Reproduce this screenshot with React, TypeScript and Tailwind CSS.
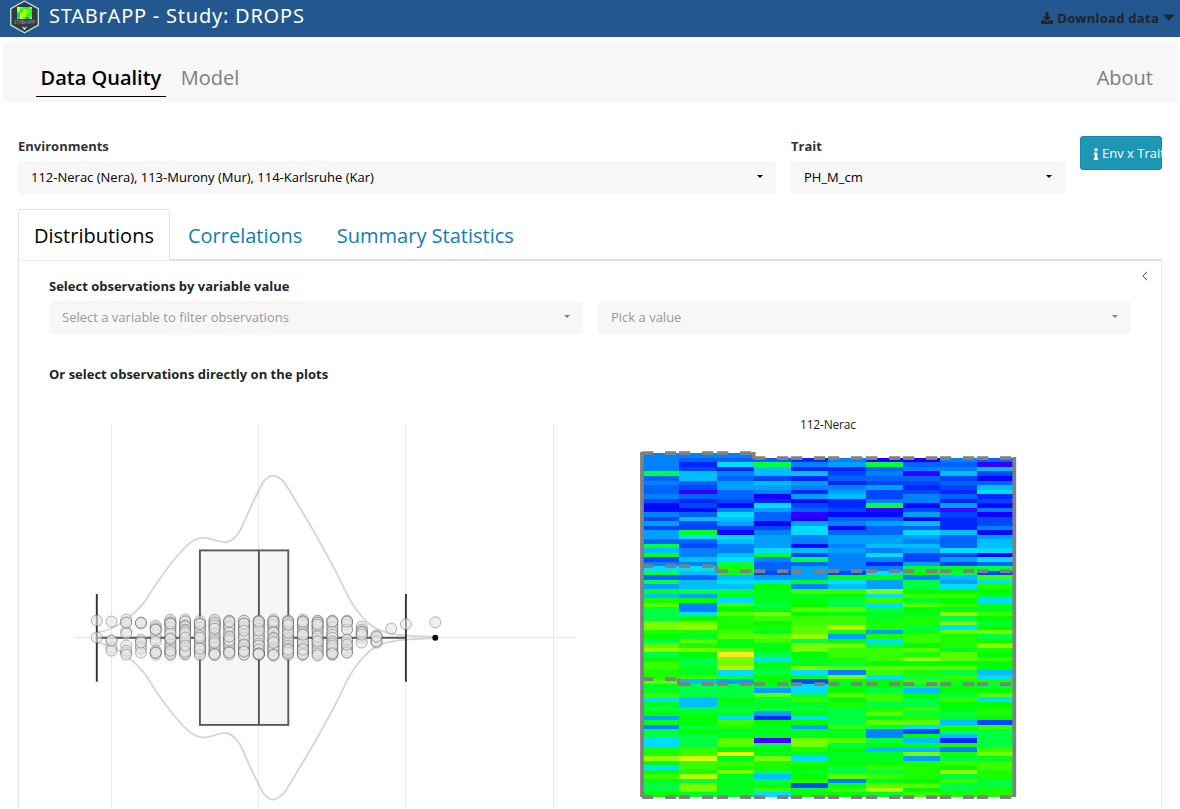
import React from "react";
import { FaDownload, FaInfo } from "react-icons/fa";

const palette: Record<string, string> = {
  A: "#4c00ff", B: "#3300ff", C: "#1500ff", D: "#0008ff", E: "#0026ff", F: "#0045ff",
  G: "#0063ff", H: "#0082ff", I: "#00a0ff", J: "#00beff", K: "#00ddff", L: "#00ff40",
  M: "#00ff20", N: "#00ff00", O: "#1aff00", P: "#38ff00", Q: "#57ff00", R: "#75ff00",
  S: "#94ff00", T: "#b5ff00", U: "#d6ff00", V: "#ffff00", W: "#ffe923",
};

const field = [
  "HHHHLGHGGHFDDHFIFIIGLJMFHK" + "LGLIMJOQLLLRRONLQSLNPPOOQ" + "MMPKMLNIMHLLKKOOSNKMPMLLN",
  "HGEFJJGFBGEFDGJFFMKGFHHJHK" + "JGJJLINHHKNRSOMQORNLLMMPJ" + "LLLJJLMNNLNLLLPPUPPOTLRRM",
  "HGKEHGIIGGFDHKJIFCKJHHJKLO" + "MJKJLMKPNQOOOPQNMQWRRTKLI" + "LLLNMLMKPOMMQQNVMPORMMMMM",
  ".GLJJFJIHCEKIGGCFHIIIKMHGG" + "FIKNMMMLMRPNOMQPMNLKMMLNN" + "MIQLMLIENMMMALNMROOLJLMPK",
  ".EHEJEIHEIDFGBCIKKHHDJFLGI" + "IIMHPMNNQNPPQQSLRRNMMRKMF" + "KKLPMLNKNIMMRROMKONMNOFMN",
  ".HIEFGEHIJEEFDGHCGIIHIHHHH" + "FNKJPNLLQMPPTOINRPPOLQHRN" + "MNQNOLLLLPMMQLNMMNLLQHMPN",
  ".CLGHGFIFFHLBDGIGGIIJHKHEH" + "KNIIRKPKLMMOOIOKLPPPNQPKN" + "NLPPLOQMQLHHLNJMMNPLPMQTM",
  ".CGHBGFEFHHDFIDJGKIHJIFFIM" + "NHLLNPMQNMOOLMPPNQOSNQOLP" + "LJNLLPLOQKFNJMJRIOOOONQNP",
  ".HGHJFGFEGEIAFEEEJGGGKFIFM" + "LJIKNPNPMSLRKQOOOMQQNQLPO" + "MNLPNNLMJOLJEOHOLPNSLPLLO",
  ".GBJFDGJKEFDHCFFHDIJJKDKGL" + "FPKONMKMMPNLNRLNSONPNNJKO" + "LNQKNOONFPLLLLPRMPPOOLLOO",
];

const colX = [642, 679, 717, 754, 791, 828, 866, 903, 940, 977, 1014];
const rowY = (r: number) => Math.round(453.4 + 4.52 * r);
const blockEdge = [
  [0, 0, 0, 1, 1, 1, 1, 1, 1, 1],
  [25, 25, 26, 26, 26, 26, 26, 26, 26, 26],
  [50, 51, 51, 51, 51, 51, 51, 51, 51, 51],
  [76, 76, 76, 76, 76, 76, 76, 76, 76, 76],
];

function FieldMap() {
  return (
    <svg className="block" width="390" height="395" viewBox="632 414 390 395" role="img">
      <g shapeRendering="crispEdges">
        {field.map((col, c) =>
          col.split("").map((k, r) =>
            k === "." ? null : (
              <rect key={c + "-" + r} x={colX[c]} y={rowY(r)} width={colX[c + 1] - colX[c]} height={rowY(r + 1) - rowY(r)} fill={palette[k]} />
            )
          )
        )}
      </g>
      <g stroke="#808080" strokeWidth="3.8">
        <path d="M642 452V797" />
        <path d="M1014.3 457V797" />
        <path d="M753.7 452V459M716.5 565.5V572M679 678.5V685" />
        {blockEdge.map((edges, b) =>
          edges.map((r, c) => {
            const y = rowY(r) + 0.2;
            return <path key={b + "-" + c} d={`M${colX[c]} ${y}h11.3m11.7 0h11.3`} />;
          })
        )}
      </g>
      <text x="828" y="429" textAnchor="middle" fontSize="12" textLength="56" fill="#222" className="font-['Open_Sans',sans-serif]">112-Nerac</text>
    </svg>
  );
}

const outline: [number, number][] = [
  [96.7, 632.7], [111.7, 628.3], [126.7, 619.3], [143.3, 603.3], [153.3, 588.3], [165, 571.5], [176.7, 556.7], [190, 542.9],
  [203.3, 537.7], [216.7, 540.6], [226.7, 542.2], [233, 539], [240, 530.7], [249, 511], [258.7, 490.5], [265, 480], [273.3, 475.6], [283, 481],
  [290, 491.5], [315, 533.5], [336.7, 573.3], [347.7, 595.7], [356.7, 610], [370, 624.5], [381.7, 631], [395, 634.3], [413, 636], [435.3, 636.9],
];

function smooth(p: [number, number][]) {
  let d = "";
  for (let i = 0; i < p.length - 1; i++) {
    const a = p[Math.max(0, i - 1)], b = p[i], c = p[i + 1], e = p[Math.min(p.length - 1, i + 2)];
    d += `C${b[0] + (c[0] - a[0]) / 6} ${b[1] + (c[1] - a[1]) / 6} ${c[0] - (e[0] - b[0]) / 6} ${c[1] - (e[1] - b[1]) / 6} ${c[0]} ${c[1]}`;
  }
  return d;
}

const lower = outline.map(([x, y]) => [x, 1275.2 - y] as [number, number]).reverse();
const violin = `M96.7 632.7${smooth(outline)}L${lower[0].join(" ")}${smooth(lower)}Z`;

// Vertical offsets of the jittered observations around the axis, one list per value.
const dots: number[][] = [
  [-17, 0],
  [-16, 3, 10, 13, 3],
  [-18, -15, -6, -4, 8, 15, -15, 13, 17],
  [-15, -14, -15, 2, 4, 9, 11, 15, 5],
  [-12, -10, -8, -3, 1, 4, 13, 15, 17, 15, -8, -8, 15],
  [-18, -15, -14, -10, -6, -4, 2, 7, 10, 14, 15, 17, 1, -14, 13],
  [-18, -16, -12, -11, -8, -7, -3, 2, 5, 10, 13, 16, -5, 0, 14, 8],
  [-14, -13, -10, -6, 1, 4, 10, 12, 14, 17, -14, 8, -2, 0, 11],
  [-18, -14, -15, -9, -12, -4, 0, 3, 7, 10, 14, 17, 16, -9, 5, 17],
  [-17, -15, -10, -11, -5, 0, 2, 4, 7, 9, 13, 15, -16, 3, -1, 15],
  [-17, -14, -10, -3, 0, 8, 11, 14, 17, 13, -14, -7, 7, 14],
  [-17, -16, -14, -12, -9, -3, -1, 2, 6, 8, 12, 16, 17, 16, -7, -16, 17, 16],
  [-18, -16, -12, -13, -6, -5, 0, 3, 4, 9, 10, 13, 17, 18, -16, 1, 5, 17],
  [-17, -15, -12, -8, -3, 0, 2, 5, 8, 11, 14, 17, -16, -5, -13, 15, 12],
  [-18, -16, -12, -14, -6, 0, -3, 6, 9, 11, 16, 17, 15, 5, -16, -3, 17, 12],
  [-17, -15, -12, -10, -7, -3, 1, 3, 7, 10, 13, 16, 18, -15, -13, -1, 4],
  [-17, -15, -10, -6, -3, 0, 4, 6, 10, 12, 15, 17, 15, -16, 8, 16],
  [-17, -16, -13, -8, 2, 5, 9, 11, 13, 15, -8, -16, 2, 15, 7],
  [-11, -8, -6, -5, -3, 0, -5, -6, 5, -3],
  [-2, 0, 3, 5, 4, -1],
  [-9],
  [-13.5],
  [],
  [-15.3],
];

// The central values are observed often enough for their dots to fill the whole band.
const dense = [-16.5, -13, -11, -8.5, -5.5, -2, 1, 3.5, 6.5, 9, 12, 14.5, 17];

function Distribution() {
  return (
    <svg className="block" width="520" height="385" viewBox="62 424 520 385" role="img">
      <g stroke="#ebebeb" strokeWidth="1.1">
        <path d="M111.5 424V809M258.5 424V809M405.5 424V809M553.5 424V809M74 637.6H576" />
      </g>
      <path d={violin} fill="none" stroke="#d3d3d3" strokeOpacity=".95" strokeWidth="1.8" />
      <g fill="none" stroke="#333" strokeWidth="1.9">
        <path stroke="#555" d="M96.7 637.8H200M288.3 637.8H405.8" />
        <path d="M96.8 594V681.7M405.9 594V681.7" />
        <rect x="199.9" y="550.4" width="88.4" height="174.5" fill="#f3f3f3" fillOpacity=".75" stroke="#5a5a5a" />
        <path stroke="#555" d="M258.9 550.4V725" />
      </g>
      <circle cx="435.3" cy="637.7" r="3" fill="#000" />
      <g fill="#e6e6e6" fillOpacity=".58" stroke="#444" strokeOpacity=".38" strokeWidth="1">
        {dots.map((list, i) =>
          (i > 4 && i < 17 ? [...dense, ...list] : list).map((o, j) => (
            <circle key={i + "-" + j} cx={96.8 + 14.72 * i} cy={637.6 + o} r="5.5" />
          ))
        )}
      </g>
    </svg>
  );
}

function Logo() {
  const cells = ["#ff0", "#6f0", "#0df", "#0f0", "#9f0", "#af0", "#0f4", "#cf0", "#8f0", "#0f6", "#0f0", "#7f0", "#ee0", "#5f0", "#0f6", "#0bf", "#bf0", "#cf0", "#3f0", "#3f0", "#0f3", "#cf0", "#3f0", "#09f", "#dd0"];
  return (
    <svg width="30" height="34" viewBox="0 0 30 34" className="block shrink-0">
      <path d="M14.5 1 28.3 8.6V25L14.5 32.8 .8 25V8.6Z" fill="#343a43" stroke="#c3e3de" strokeWidth="1.3" />
      <g shapeRendering="crispEdges">
        {cells.map((f, i) => <rect key={i} x={7 + (i % 5) * 3} y={7 + Math.floor(i / 5) * 2.4} width="3" height="2.4" fill={f} />)}
      </g>
      <text x="14.5" y="23.7" textAnchor="middle" fontSize="4.6" fill="#9aa4a8" className="font-['Open_Sans',sans-serif]">STABrAPP</text>
      <path d="M12.3 27 14.5 30 16.9 27 14.5 28Z" fill="#c5e8d4" stroke="#c5e8d4" strokeWidth=".5" />
    </svg>
  );
}

function Select({ text, muted, className }: { text: string; muted?: boolean; className: string }) {
  return (
    <div className={"flex h-[33px] items-center justify-between rounded bg-[#f7f7f7] pl-[13px] pr-[13px] text-[13px] " + (muted ? "text-[#999] " : "text-black ") + className}>
      <span>{text}</span>
      <span className={"mb-0.5 h-0 w-0 border-x-[3px] border-t-[3px] border-x-transparent " + (muted ? "border-t-[#808080]" : "border-t-black")} />
    </div>
  );
}

export default function App() {
  return (
    <div className="h-[809px] w-[1180px] overflow-hidden bg-white font-['Open_Sans',sans-serif] text-[13px] text-[#212529]">
      <header className="flex h-[37px] items-start justify-between bg-[#22578f] pl-[10px] pr-[5px]">
        <div className="flex">
          <Logo />
          <h1 className="ml-[9px] mt-px font-['Noto_Sans',sans-serif] text-[20px] leading-[30px] tracking-[0.77px] text-white">STABrAPP - Study: DROPS</h1>
        </div>
        <div className="mt-[8px] flex items-center font-['Noto_Sans',sans-serif] text-[13px] font-bold leading-5 tracking-[0.3px] text-[#212529]">
          <FaDownload className="mr-1 size-3" />
          <span>Download data</span>
          <svg className="mb-px ml-[4px]" width="12" height="7" viewBox="0 0 12 7"><path d="M.3.5h11.4L6 6.7Z" fill="#212529" /></svg>
        </div>
      </header>

      <nav className="mx-[3px] mt-[5px] flex h-[60px] items-start bg-[#f7f7f7] pl-[33px] pr-[24px] text-[20px] leading-[30px] text-[#808080]">
        <span className="mt-[21px] h-[34px] border-b border-black px-[4.5px] font-semibold text-black">Data Quality</span>
        <span className="ml-[15px] mt-[21px]">Model</span>
        <span className="ml-auto mt-[21px]">About</span>
      </nav>

      <section className="mx-[18px] flex h-[107px] items-start">
        <div className="mt-[34px] w-[758px]">
          <div className="h-[25px] font-bold leading-5 text-[#333]">Environments</div>
          <Select text="112-Nerac (Nera), 113-Murony (Mur), 114-Karlsruhe (Kar)" className="w-full" />
        </div>
        <div className="ml-[15px] mt-[34px] w-[274px]">
          <div className="h-[25px] font-bold leading-5 text-[#333]">Trait</div>
          <Select text="PH_M_cm" className="w-full" />
        </div>
        <button className="ml-[15px] mt-[34px] flex h-[34px] w-[82px] items-center overflow-hidden whitespace-nowrap rounded bg-[#1e97b4] pl-[10px] pt-px text-[13px] text-white inset-ring inset-ring-[#1788a0]">
          <FaInfo className="size-3 shrink-0" />
          <span>Env x Trait</span>
        </button>
      </section>

      <section className="mx-[18px]">
        <div className="flex h-[52px] border-b-2 border-[#dfe1e3] text-[20px] leading-[53px] text-[#0d7dc0]">
          <span className="h-[52px] rounded-t border border-[#dee2e6] border-b-[#e9ebed] bg-white px-[15px] leading-[51px] text-black">Distributions</span>
          <span className="ml-[18px]">Correlations</span>
          <span className="ml-[34.5px]">Summary Statistics</span>
        </div>
        <div className="h-[548px] border-x border-[#e5e7ea] px-[30px]">
          <div className="flex h-[40px] justify-between pt-[15px]">
            <div className="font-bold leading-5 text-[#212529]">Select observations by variable value</div>
            <svg width="10" height="10" viewBox="0 0 10 10" className="-mr-[19px] -mt-[5px]" fill="none" stroke="#444" strokeWidth="1"><path d="M7 .8 2.8 5 7 9.2" /></svg>
          </div>
          <div className="flex gap-[15px]">
            <Select muted text="Select a variable to filter observations" className="w-[534px]" />
            <Select muted text="Pick a value" className="w-[533px]" />
          </div>
          <div className="mt-[30px] font-bold leading-5">Or select observations directly on the plots</div>
          <div className="mt-[30px] flex items-end gap-[50px] pl-[13px]">
            <Distribution />
            <FieldMap />
          </div>
        </div>
      </section>
    </div>
  );
}
